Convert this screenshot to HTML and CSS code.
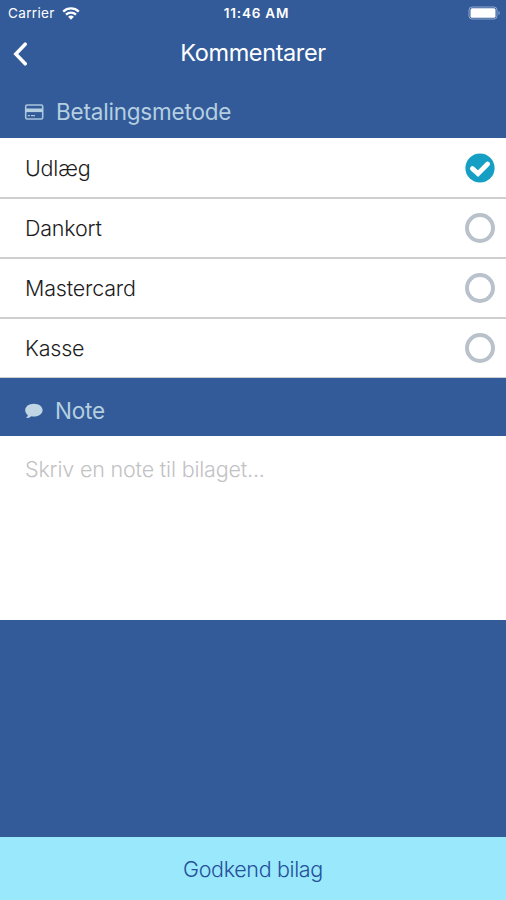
FILE: index.html
```html
<!DOCTYPE html>
<html lang="da">
<head>
  <meta charset="UTF-8">
  <meta name="viewport" content="width=device-width, initial-scale=1.0">
  <title>Kommentarer</title>
  <link rel="stylesheet" href="styles.css">
</head>
<body>
  <div class="status-bar">
    <div class="carrier">
      <span>Carrier</span>
      <svg class="wifi" viewBox="0 0 18 13" width="18" height="13">
        <path d="M1.2 4.6a11.2 11.2 0 0 1 15.6 0M4 7.7a7.2 7.2 0 0 1 10 0" fill="none" stroke="#fff" stroke-width="2.3"/>
        <path d="M9 12.8L6.1 9.8a4.2 4.2 0 0 1 5.8 0z" fill="#fff"/>
      </svg>
    </div>
    <span class="time">11:46 AM</span>
    <svg class="battery" viewBox="0 0 34 14" width="34" height="14">
      <rect x="1" y="1" width="28" height="12" rx="3" fill="none" stroke="#8fa6cd"/>
      <rect x="2.5" y="2.2" width="25" height="9.6" rx="1.5" fill="#fff"/>
      <path d="M30.5 5v4a2.2 2.2 0 0 0 0-4z" fill="#8fa6cd"/>
    </svg>
  </div>
  <header class="nav-bar">
    <button type="button" class="back-btn" aria-label="Tilbage">
      <svg viewBox="0 0 16 24" width="16" height="24">
        <path d="M13.2 2.2L3.8 12l9.4 9.8" fill="none" stroke="#fff" stroke-width="3.5" stroke-linecap="round"/>
      </svg>
    </button>
    <h1>Kommentarer</h1>
  </header>

  <h2 class="section-title">
    <svg viewBox="0 0 20 18" width="20" height="18">
      <rect x="1.7" y="2" width="17" height="14" rx="1.5" fill="none" stroke="#a9c5dc" stroke-width="1.6"/>
      <path d="M1.7 5.5h17v3.6h-17z" fill="#b4cfe0"/>
      <path d="M3.8 12.6h2.2M7 12.6h4" fill="none" stroke="#a9c5dc" stroke-width="1.3"/>
    </svg>
    <span>Betalingsmetode</span>
  </h2>
  <ul class="methods">
    <li class="method">
      <span>Udlæg</span>
      <svg class="check" viewBox="0 0 30 30" width="30" height="30">
        <circle cx="15" cy="15" r="14.6" fill="#159fc4"/>
        <path d="M7.4 15.6l5.6 5L22.6 11" fill="none" stroke="#fff" stroke-width="4.8" stroke-linecap="round"/>
      </svg>
    </li>
    <li class="method"><span>Dankort</span><i class="radio"></i></li>
    <li class="method"><span>Mastercard</span><i class="radio"></i></li>
    <li class="method"><span>Kasse</span><i class="radio"></i></li>
  </ul>

  <h2 class="section-title note-title">
    <svg viewBox="0 0 20 18" width="20" height="18">
      <path d="M9.9 1.8c4.9 0 8.7 2.8 8.7 6.4s-3.8 6.3-8.7 6.3c-.9 0-1.7-.1-2.5-.3-1.4 1.2-3.3 1.9-5.6 1.9 1.2-1 1.9-2 2-3.2C2 11.7 1.2 10.1 1.2 8.2c0-3.6 3.8-6.4 8.7-6.4z" fill="#c0d6e4"/>
    </svg>
    <span>Note</span>
  </h2>
  <textarea class="note" placeholder="Skriv en note til bilaget..."></textarea>

  <button type="button" class="approve-btn">Godkend bilag</button>
</body>
</html>
```
FILE: styles.css
```css
* {
  box-sizing: border-box;
  margin: 0;
  padding: 0;
}
body {
  font-family: Inter, "Liberation Sans", sans-serif;
  height: 100vh;
  display: flex;
  flex-direction: column;
  background-color: #335b99;
  color: #fff;
  overflow: hidden;
}
button,
textarea {
  font-family: inherit;
  border: none;
}
.status-bar {
  display: grid;
  grid-template-columns: 1fr auto 1fr;
  align-items: center;
  height: 26px;
  padding: 0 4px 0 8px;
  font-size: 13.5px;
}
.carrier {
  display: flex;
  align-items: center;
  gap: 7px;
  letter-spacing: 0.35px;
}
.time {
  font-size: 13.5px;
  font-weight: 600;
  letter-spacing: 0.8px;
  padding-left: 3px;
}
.battery {
  justify-self: end;
}
.nav-bar {
  display: grid;
  grid-template-columns: 50px 1fr 50px;
  align-items: center;
  height: 54px;
}
.back-btn {
  display: flex;
  padding: 1px 0 0 12px;
  background: none;
}
h1 {
  font-size: 23.5px;
  font-weight: 400;
  letter-spacing: -0.4px;
  text-align: center;
  padding-bottom: 1px;
}
.section-title {
  display: flex;
  align-items: center;
  gap: 12px;
  height: 58px;
  padding: 6px 24px 0;
  font-size: 22.5px;
  font-weight: 400;
  letter-spacing: -0.2px;
  color: #b4cfe0;
}
.section-title span {
  padding-bottom: 2px;
}
.note-title {
  gap: 11px;
  padding-top: 8px;
}
.methods {
  list-style: none;
  padding-top: 1px;
  background-color: #fff;
}
.method {
  display: flex;
  justify-content: space-between;
  align-items: center;
  height: 60px;
  padding: 0 11px 0 25px;
  border-bottom: 2px solid #cfcfcf;
  font-size: 21.5px;
  font-weight: 300;
  letter-spacing: -0.2px;
  color: #1c1c22;
}
.method:last-child {
  height: 59px;
  border-bottom-width: 1px;
}
.radio {
  width: 30px;
  height: 30px;
  border: 4px solid #b9c1cb;
  border-radius: 50%;
}
.note {
  height: 184px;
  padding: 20px 25px;
  font-size: 21.5px;
  font-weight: 300;
  line-height: 26px;
  letter-spacing: -0.17px;
  color: #1c1c22;
  background-color: #fff;
  resize: none;
  outline: none;
}
.note::placeholder {
  color: #c2c2c4;
}
.approve-btn {
  height: 63px;
  margin-top: auto;
  font-size: 21.5px;
  font-weight: 350;
  letter-spacing: -0.35px;
  color: #24509a;
  background-color: #9ae8fb;
}
```
